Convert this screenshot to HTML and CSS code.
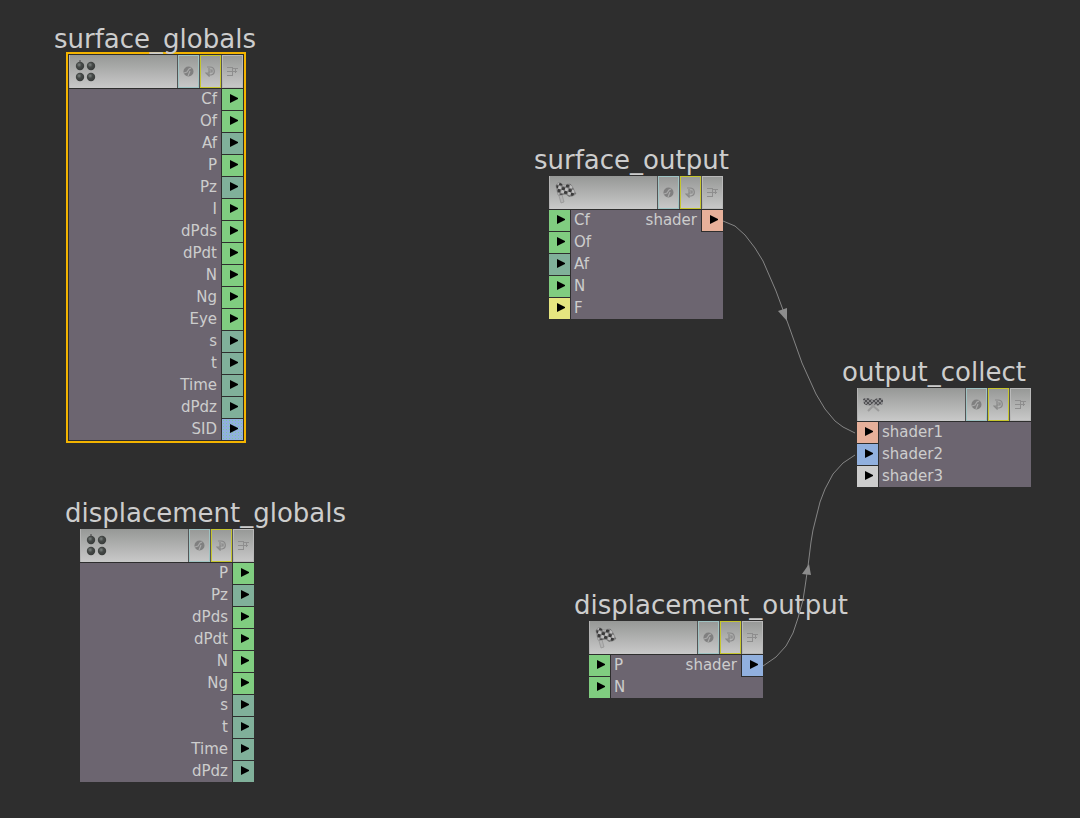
FILE: index.html
```
<!DOCTYPE html>
<html lang="en">
<head>
<meta charset="utf-8">
<title>Shader network</title>
<link rel="stylesheet" href="styles.css">
</head>
<body>
<svg class="symbols" aria-hidden="true">
  <defs>
    <radialGradient id="ball" cx="0.4" cy="0.36" r="0.65">
      <stop offset="0" stop-color="#7d8381"/><stop offset="0.45" stop-color="#454947"/><stop offset="1" stop-color="#383b3a"/>
    </radialGradient>
    <pattern id="check" width="7" height="7" patternUnits="userSpaceOnUse" patternTransform="rotate(16)">
      <rect width="7" height="7" fill="#bebebe"/><path d="M0 0h3.500v3.500H0zM3.500 3.500h3.500v3.500H3.500z" fill="#3a3a3a"/>
    </pattern>
    <pattern id="check-small" width="4" height="4" patternUnits="userSpaceOnUse">
      <rect width="4" height="4" fill="#8c8c8e"/><path d="M0 0h2v2H0zM2 2h2v2H2z" fill="#505053"/>
    </pattern>
  </defs>
  <symbol id="globals" viewBox="0 0 24 24">
    <g fill="url(#ball)"><circle cx="7" cy="7" r="4.200"/><circle cx="18" cy="7" r="4.200"/><circle cx="7" cy="18" r="4.200"/><circle cx="18" cy="18" r="4.200"/></g>
    <path d="M7 4V1M18 4l1-1M7 15v-1M18 15v-1" stroke="#444" fill="none"/>
  </symbol>
  <symbol id="flag" viewBox="0 0 24 24">
    <path d="M3 5l5 18 3-1L6 4z" fill="#b2b2b2" stroke="#8c8c8c" stroke-width="0.6"/>
    <path d="M3 6c1-4 4-4 6-2 3 3 5-1 8 0 2 1 3 4 6 10-3 2-6 4-9 1-2-2-6 1-9 0z" fill="url(#check)" stroke="#777" stroke-width="0.5"/>
  </symbol>
  <symbol id="flags" viewBox="0 0 24 24">
    <path d="M7 19L14 12M18 19L10 12" stroke="#999" stroke-width="2" fill="none"/>
    <path d="M2 7c3-2 6-1 10 1 4-2 7-3 10-1v5c-3 1-5 2-8 1l-2-2-2 2c-3 1-5 0-7-1z" fill="url(#check-small)"/>
  </symbol>
  <symbol id="bypass" viewBox="0 0 11 11">
    <circle cx="5.500" cy="5.500" r="5" fill="#808080"/>
    <path d="M1 7l3-1 2-3 2-1M5 10l2-5" stroke="#aaa" stroke-width="1.200" fill="none"/>
  </symbol>
  <symbol id="preview" viewBox="0 0 11 11">
    <path d="M2 1h3c5 0 6 7 1 8H4M4 2v4h3V4H5M1 7l3 3V7z" stroke="#898989" stroke-width="1.200" fill="none"/>
  </symbol>
  <symbol id="material" viewBox="0 0 11 11">
    <path d="M0 1.500h5M0 5.500h5M0 9.500h5M5.500 1v9M6 2.500h5M6 5.500h4M8.500 2v5" stroke="#8e8e8e" stroke-width="1" fill="none"/>
  </symbol>
  <symbol id="tri" viewBox="0 0 8 9"><path d="M0 0v9l8-4v-1z"/></symbol>
</svg>
<main class="canvas">
  <article class="node node-surface-globals">
    <h2 class="title">surface_globals</h2>
    <div class="box selected">
      <header class="head"><svg class="kind"><use href="#globals"/></svg><button class="flag cyan" aria-label="Bypass"><svg><use href="#bypass"/></svg></button><button class="flag yellow" aria-label="Preview"><svg><use href="#preview"/></svg></button><button class="flag" aria-label="Material"><svg><use href="#material"/></svg></button></header>
      <div class="body">
        <ul class="ports outputs">
          <li><span>Cf</span><button class="port green" aria-label="Cf"><svg><use href="#tri"/></svg></button></li>
          <li><span>Of</span><button class="port green" aria-label="Of"><svg><use href="#tri"/></svg></button></li>
          <li><span>Af</span><button class="port teal" aria-label="Af"><svg><use href="#tri"/></svg></button></li>
          <li><span>P</span><button class="port green" aria-label="P"><svg><use href="#tri"/></svg></button></li>
          <li><span>Pz</span><button class="port teal" aria-label="Pz"><svg><use href="#tri"/></svg></button></li>
          <li><span>I</span><button class="port green" aria-label="I"><svg><use href="#tri"/></svg></button></li>
          <li><span>dPds</span><button class="port green" aria-label="dPds"><svg><use href="#tri"/></svg></button></li>
          <li><span>dPdt</span><button class="port green" aria-label="dPdt"><svg><use href="#tri"/></svg></button></li>
          <li><span>N</span><button class="port green" aria-label="N"><svg><use href="#tri"/></svg></button></li>
          <li><span>Ng</span><button class="port green" aria-label="Ng"><svg><use href="#tri"/></svg></button></li>
          <li><span>Eye</span><button class="port green" aria-label="Eye"><svg><use href="#tri"/></svg></button></li>
          <li><span>s</span><button class="port teal" aria-label="s"><svg><use href="#tri"/></svg></button></li>
          <li><span>t</span><button class="port teal" aria-label="t"><svg><use href="#tri"/></svg></button></li>
          <li><span>Time</span><button class="port teal" aria-label="Time"><svg><use href="#tri"/></svg></button></li>
          <li><span>dPdz</span><button class="port teal" aria-label="dPdz"><svg><use href="#tri"/></svg></button></li>
          <li><span>SID</span><button class="port blue dotted" aria-label="SID"><svg><use href="#tri"/></svg></button></li>
        </ul>
      </div>
    </div>
  </article>

  <article class="node node-displacement-globals">
    <h2 class="title">displacement_globals</h2>
    <div class="box">
      <header class="head"><svg class="kind"><use href="#globals"/></svg><button class="flag cyan" aria-label="Bypass"><svg><use href="#bypass"/></svg></button><button class="flag yellow" aria-label="Preview"><svg><use href="#preview"/></svg></button><button class="flag" aria-label="Material"><svg><use href="#material"/></svg></button></header>
      <div class="body">
        <ul class="ports outputs">
          <li><span>P</span><button class="port green" aria-label="P"><svg><use href="#tri"/></svg></button></li>
          <li><span>Pz</span><button class="port teal" aria-label="Pz"><svg><use href="#tri"/></svg></button></li>
          <li><span>dPds</span><button class="port green" aria-label="dPds"><svg><use href="#tri"/></svg></button></li>
          <li><span>dPdt</span><button class="port green" aria-label="dPdt"><svg><use href="#tri"/></svg></button></li>
          <li><span>N</span><button class="port green" aria-label="N"><svg><use href="#tri"/></svg></button></li>
          <li><span>Ng</span><button class="port green" aria-label="Ng"><svg><use href="#tri"/></svg></button></li>
          <li><span>s</span><button class="port teal" aria-label="s"><svg><use href="#tri"/></svg></button></li>
          <li><span>t</span><button class="port teal" aria-label="t"><svg><use href="#tri"/></svg></button></li>
          <li><span>Time</span><button class="port teal" aria-label="Time"><svg><use href="#tri"/></svg></button></li>
          <li><span>dPdz</span><button class="port teal" aria-label="dPdz"><svg><use href="#tri"/></svg></button></li>
        </ul>
      </div>
    </div>
  </article>

  <article class="node node-surface-output">
    <h2 class="title">surface_output</h2>
    <div class="box">
      <header class="head"><svg class="kind"><use href="#flag"/></svg><button class="flag cyan" aria-label="Bypass"><svg><use href="#bypass"/></svg></button><button class="flag yellow" aria-label="Preview"><svg><use href="#preview"/></svg></button><button class="flag" aria-label="Material"><svg><use href="#material"/></svg></button></header>
      <div class="body">
        <ul class="ports">
          <li><button class="port green" aria-label="Cf"><svg><use href="#tri"/></svg></button><span>Cf</span></li>
          <li><button class="port green" aria-label="Of"><svg><use href="#tri"/></svg></button><span>Of</span></li>
          <li><button class="port teal" aria-label="Af"><svg><use href="#tri"/></svg></button><span>Af</span></li>
          <li><button class="port green" aria-label="N"><svg><use href="#tri"/></svg></button><span>N</span></li>
          <li><button class="port lemon" aria-label="F"><svg><use href="#tri"/></svg></button><span>F</span></li>
        </ul>
        <ul class="ports outputs">
          <li><span>shader</span><button class="port salmon" aria-label="shader"><svg><use href="#tri"/></svg></button></li>
        </ul>
      </div>
    </div>
  </article>

  <article class="node node-displacement-output">
    <h2 class="title">displacement_output</h2>
    <div class="box">
      <header class="head"><svg class="kind"><use href="#flag"/></svg><button class="flag cyan" aria-label="Bypass"><svg><use href="#bypass"/></svg></button><button class="flag yellow" aria-label="Preview"><svg><use href="#preview"/></svg></button><button class="flag" aria-label="Material"><svg><use href="#material"/></svg></button></header>
      <div class="body">
        <ul class="ports">
          <li><button class="port green" aria-label="P"><svg><use href="#tri"/></svg></button><span>P</span></li>
          <li><button class="port green" aria-label="N"><svg><use href="#tri"/></svg></button><span>N</span></li>
        </ul>
        <ul class="ports outputs">
          <li><span>shader</span><button class="port blue" aria-label="shader"><svg><use href="#tri"/></svg></button></li>
        </ul>
      </div>
    </div>
  </article>

  <article class="node node-output-collect">
    <h2 class="title">output_collect</h2>
    <div class="box">
      <header class="head"><svg class="kind"><use href="#flags"/></svg><button class="flag cyan" aria-label="Bypass"><svg><use href="#bypass"/></svg></button><button class="flag yellow" aria-label="Preview"><svg><use href="#preview"/></svg></button><button class="flag" aria-label="Material"><svg><use href="#material"/></svg></button></header>
      <div class="body">
        <ul class="ports">
          <li><button class="port salmon" aria-label="shader1"><svg><use href="#tri"/></svg></button><span>shader1</span></li>
          <li><button class="port blue" aria-label="shader2"><svg><use href="#tri"/></svg></button><span>shader2</span></li>
          <li><button class="port white" aria-label="shader3"><svg><use href="#tri"/></svg></button><span>shader3</span></li>
        </ul>
      </div>
    </div>
  </article>

  <svg class="wires" aria-hidden="true">
    <polyline points="723,221 735,226 745,235 755,248 763,261 776,291 786,318 802,363 816,394 825,409 835,421 843,427 855,433"/>
    <polyline points="763,666 776,657 786,646 793,633 798,618 803,600 805,587 808,566 811,542 813,530 820,502 825,489 833,474 843,463 855,455"/>
    <path d="M778 311L787 308V321Z"/>
    <path d="M802 574L811 575L809 564Z"/>
  </svg>
</main>
</body>
</html>
```
FILE: styles.css
```
* { box-sizing: border-box; }

body {
  margin: 0;
  background: #2e2e2e;
  color: #cdcdcd;
  font: 15px/20px "DejaVu Sans", sans-serif;
}

.symbols { position: absolute; width: 0; height: 0; }

.canvas { position: relative; min-height: 100vh; overflow: hidden; }

/* Nodes sit freely on the canvas */
.node { position: absolute; width: 174px; }
.node-surface-globals { left: 69px; top: 23px; }
.node-displacement-globals { left: 80px; top: 497px; }
.node-surface-output { left: 549px; top: 144px; }
.node-displacement-output { left: 589px; top: 589px; }
.node-output-collect { left: 857px; top: 356px; }

.title {
  position: relative;
  z-index: 1;
  margin: 0 0 0 -15px;
  font-size: 26px;
  font-weight: normal;
  line-height: 32px;
  white-space: nowrap;
}

.selected { outline: 2px solid #f4b400; outline-offset: 1px; }

.head {
  display: flex;
  align-items: flex-start;
  gap: 1px;
  height: 33px;
  margin-bottom: 1px;
  background: linear-gradient(#969896, #c9c9c9);
  border-left: 1px solid #b4b4b4;
}

.kind { width: 24px; height: 24px; margin: 4px auto 0 3px; }

.flag {
  display: grid;
  place-items: center;
  width: 21px;
  height: 33px;
  padding: 0 1px 0 0;
  border: 1px solid #b9b9b9;
  background: none;
  box-shadow: -1px 0 #555;
}
.flag svg { width: 11px; height: 11px; }
.cyan { border-color: #9fc3c3; }
.yellow { border-color: #c6c62e; }

.body {
  display: flex;
  align-items: flex-start;
  background: #6c6570;
}

.ports {
  display: grid;
  gap: 1px;
  margin: 0;
  padding: 0;
  list-style: none;
}
.outputs { margin-left: auto; }

.ports li { display: flex; gap: 4px; height: 21px; }
.outputs li { justify-content: flex-end; gap: 5px; }

.port {
  width: 21px;
  height: 21px;
  padding: 0 0 2px 3px;
  border: 0;
  box-shadow: 0 0 0 1px #2e2e2e;
}
.port svg { display: block; width: 8px; height: 9px; margin: 0 auto; }

.green { background: #80cd80; }
.teal { background: #80b09a; }
.salmon { background: #e6b09a; }
.blue { background: #91b0de; }
.lemon { background: #e6e680; }
.white { background: #cdcdcd; }
.dotted {
  background-image: radial-gradient(#80c89a 1px, transparent 1px);
  background-size: 3px 3px;
}

.wires {
  position: absolute;
  z-index: 2;
  left: 0;
  top: 0;
  width: 100%;
  height: 100%;
  pointer-events: none;
}
.wires polyline { fill: none; stroke: #858585; stroke-width: 1; }
.wires path { fill: #8c8c8c; }
```
